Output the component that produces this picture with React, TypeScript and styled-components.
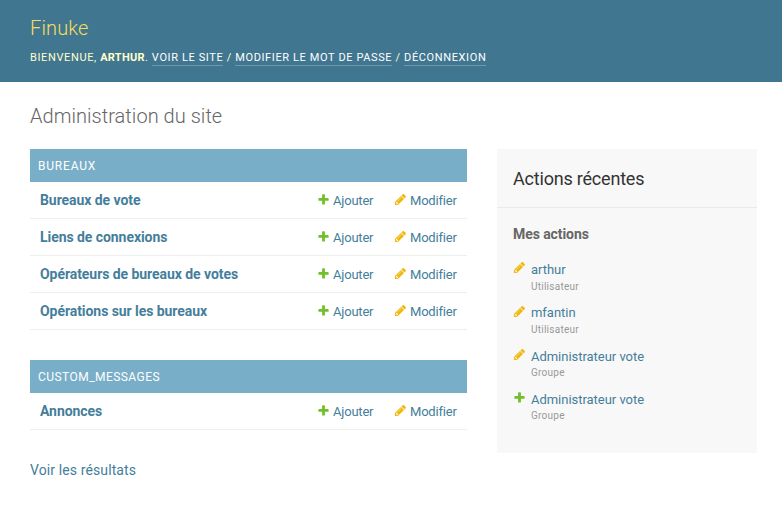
import React from "react";
import styled, { createGlobalStyle } from "styled-components";

const Global = createGlobalStyle`
  * { box-sizing: border-box; }
  body { margin: 0; background: #fff; color: #333; font: 14px/17px Roboto, "Liberation Sans", sans-serif; overflow: hidden; }
`;

const Header = styled.header`
  background: #417690;
  height: 82px;
  padding: 16px 30px 0;
  color: #ffc;
`;
const Brand = styled.h1`
  margin: 0 0 11px;
  font-size: 20px;
  line-height: 24px;
  font-weight: 300;
  letter-spacing: 0.15px;
  color: #f5dd5d;
`;
const UserTools = styled.nav`
  font-size: 11px;
  line-height: 14px;
  font-weight: 400;
  letter-spacing: 0.62px;
  text-transform: uppercase;
  white-space: nowrap;

  strong {
    letter-spacing: 0.3px;
  }
`;
const UserLink = styled.a`
  color: #fff;
  padding-bottom: 1px;
  border-bottom: 1px solid rgba(255, 255, 255, 0.25);
`;
const Main = styled.main`
  padding: 22px 25px 0 30px;
`;
const Title = styled.h2`
  margin: 0 0 21px;
  font-size: 20px;
  line-height: 24px;
  font-weight: 300;
  letter-spacing: 0.04px;
  color: #666;
`;
const Columns = styled.div`
  display: flex;
  justify-content: space-between;
  align-items: flex-start;
`;
const Apps = styled.div`
  width: 437px;
`;
const Module = styled.section`
  margin-bottom: 30px;
`;
const Caption = styled.h3<{ $tracking: number }>`
  margin: 0;
  height: 33px;
  padding: 1px 8px 0;
  font-size: 12px;
  line-height: 33px;
  font-weight: 400;
  letter-spacing: ${(p) => p.$tracking}px;
  text-transform: uppercase;
  color: #fff;
  background: #79aec8;
`;
const Row = styled.div`
  display: grid;
  grid-template-columns: 1fr 77px 73px;
  height: 37px;
  padding-left: 10px;
  line-height: 36px;
  border-bottom: 1px solid #eee;
`;
const Model = styled.a`
  font-weight: 700;
  letter-spacing: -0.06px;
  color: #447e9b;
`;
const RowAction = styled.a`
  display: flex;
  align-items: flex-start;
  gap: 3px;
  font-size: 13px;
  line-height: 38px;
  letter-spacing: -0.2px;
  color: #447e9b;

  svg {
    margin-top: 11px;
  }
`;
const Results = styled.a`
  display: block;
  margin-top: 32px;
  letter-spacing: 0.11px;
  color: #447e9b;
`;
const Sidebar = styled.aside`
  width: 260px;
  height: 304px;
  background: #f8f8f8;
`;
const SideTitle = styled.h2`
  margin: 0;
  height: 59px;
  padding: 0 16px;
  font-size: 18px;
  line-height: 59px;
  font-weight: 400;
  letter-spacing: -0.2px;
  color: #333;
  border-bottom: 1px solid #eaeaea;
`;
const SideSub = styled.h3`
  margin: 18px 16px;
  font-size: 14px;
  line-height: 17px;
  font-weight: 700;
  letter-spacing: -0.08px;
  color: #666;
`;
const Actions = styled.ul`
  list-style: none;
  margin: 0;
  padding: 0.05px 16px 0;
`;
const Action = styled.li`
  display: grid;
  grid-template-columns: 18px 1fr;
  height: 43.25px;

  svg {
    margin-top: 0.35px;
  }
`;
const ActionLink = styled.a`
  display: block;
  font-size: 13px;
  line-height: 17px;
  letter-spacing: -0.03px;
  color: #447e9b;
`;
const Kind = styled.span`
  display: block;
  padding-top: 0.58px;
  font-size: 10px;
  line-height: 16px;
  letter-spacing: 0.25px;
  color: #999;
`;
const Glyph = styled.svg`
  display: block;
  flex: none;
  width: 13px;
  height: 13px;
`;

type IconKind = "add" | "change";

function Icon({ kind }: { kind: IconKind }) {
  return kind === "add" ? (
    <Glyph viewBox="0 0 1792 1792">
      <path fill="#70bf2b" d="M1600 796v192q0 40-28 68t-68 28h-416v416q0 40-28 68t-68 28h-192q-40 0-68-28t-28-68v-416h-416q-40 0-68-28t-28-68v-192q0-40 28-68t68-28h416v-416q0-40 28-68t68-28h192q40 0 68 28t28 68v416h416q40 0 68 28t28 68z" />
    </Glyph>
  ) : (
    <Glyph viewBox="0 0 1792 1792">
      <path fill="#efb80b" d="M491 1536l91-91-235-235-91 91v107h128v128h107zm523-928q0-22-22-22-10 0-17 7l-542 542q-7 7-7 17 0 22 22 22 10 0 17-7l542-542q7-7 7-17zm-54-192l416 416-832 832h-416v-416zm683 96q0 53-37 90l-166 166-416-416 166-165q36-38 90-38 53 0 91 38l235 234q37 39 37 91z" />
    </Glyph>
  );
}

const apps = [
  { name: "Bureaux", tracking: 0.8, models: ["Bureaux de vote", "Liens de connexions", "Opérateurs de bureaux de votes", "Opérations sur les bureaux"] },
  { name: "Custom_Messages", tracking: 0.45, models: ["Annonces"] },
];

const recent: { kind: IconKind; label: string; type: string }[] = [
  { kind: "change", label: "arthur", type: "Utilisateur" },
  { kind: "change", label: "mfantin", type: "Utilisateur" },
  { kind: "change", label: "Administrateur vote", type: "Groupe" },
  { kind: "add", label: "Administrateur vote", type: "Groupe" },
];

export default function App() {
  return (
    <>
      <Global />
      <Header>
        <Brand>Finuke</Brand>
        <UserTools>
          Bienvenue, <strong>Arthur</strong>. <UserLink>Voir le site</UserLink> / <UserLink>Modifier le mot de passe</UserLink> / <UserLink>Déconnexion</UserLink>
        </UserTools>
      </Header>
      <Main>
        <Title>Administration du site</Title>
        <Columns>
          <Apps>
            {apps.map((app) => (
              <Module key={app.name}>
                <Caption $tracking={app.tracking}>{app.name}</Caption>
                {app.models.map((model) => (
                  <Row key={model}>
                    <Model>{model}</Model>
                    <RowAction><Icon kind="add" />Ajouter</RowAction>
                    <RowAction><Icon kind="change" />Modifier</RowAction>
                  </Row>
                ))}
              </Module>
            ))}
            <Results>Voir les résultats</Results>
          </Apps>
          <Sidebar>
            <SideTitle>Actions récentes</SideTitle>
            <SideSub>Mes actions</SideSub>
            <Actions>
              {recent.map((item, i) => (
                <Action key={i}>
                  <Icon kind={item.kind} />
                  <div>
                    <ActionLink>{item.label}</ActionLink>
                    <Kind>{item.type}</Kind>
                  </div>
                </Action>
              ))}
            </Actions>
          </Sidebar>
        </Columns>
      </Main>
    </>
  );
}
